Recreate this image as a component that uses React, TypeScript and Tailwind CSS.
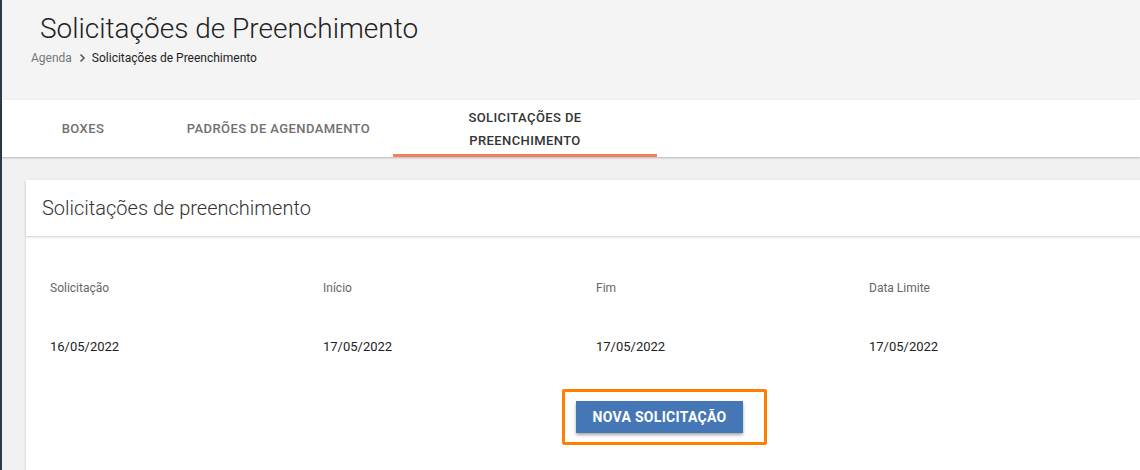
import React from "react";

export default function App() {
  const cols = ["Solicitação", "Início", "Fim", "Data Limite"];
  const vals = ["16/05/2022", "17/05/2022", "17/05/2022", "17/05/2022"];
  return (
    <div
      className="w-[1140px] h-[470px] overflow-hidden flex bg-[#f1f1f1]"
      style={{ fontFamily: "Roboto, 'Liberation Sans', sans-serif" }}
    >
      <div className="w-[2px] shrink-0 bg-[#2f3949]" />
      <div className="flex-1 min-w-0 flex flex-col">
        {/* Header */}
        <div className="h-[100px] shrink-0 bg-[#f4f4f4] pt-[11px]">
          <h1 className="pl-[38px] text-[28px] leading-[36px] font-light text-[#222]">
            Solicitações de Preenchimento
          </h1>
          <div className="pl-[29px] mt-[3px] flex items-center text-[12px] leading-[16px]">
            <span className="text-[#777]">Agenda</span>
            <svg
              width="12"
              height="12"
              viewBox="0 0 24 24"
              className="mx-[4px]"
              fill="none"
              stroke="#555"
              strokeWidth="3"
            >
              <path d="M9 5l7 7-7 7" />
            </svg>
            <span className="text-[#222]">Solicitações de Preenchimento</span>
          </div>
        </div>
        {/* Tabs */}
        <div className="h-[57px] shrink-0 bg-white flex items-stretch shadow-[0_1px_2px_rgba(0,0,0,0.25)] relative z-10 text-[13px] font-medium tracking-[0.4px] uppercase">
          <div className="w-[162px] flex items-center justify-center text-[#707070]">
            Boxes
          </div>
          <div className="w-[229px] flex items-center justify-center text-[#707070]">
            Padrões de Agendamento
          </div>
          <div className="w-[264px] flex flex-col justify-center items-center text-[#333] border-b-[3px] border-[#f0805f] pt-[3px] leading-[23px]">
            <span>Solicitações de</span>
            <span>Preenchimento</span>
          </div>
        </div>
        {/* Content */}
        <div className="pl-[24px] pt-[23px] shrink-0">
          <div className="w-[1160px] bg-white shadow-[0_1px_3px_rgba(0,0,0,0.15)]">
            <div className="h-[57px] flex items-center pl-[16px] border-b border-[#dcdcdc] shadow-[0_1px_2px_rgba(0,0,0,0.08)]">
              <h2 className="text-[20px] font-light text-[#333]">
                Solicitações de preenchimento
              </h2>
            </div>
            <div className="pl-[24px] pt-[43px]">
              <div className="grid grid-cols-[273px_273px_273px_273px]">
                {cols.map((c) => (
                  <div
                    key={c}
                    className="text-[12px] leading-[16px] text-[#666]"
                  >
                    {c}
                  </div>
                ))}
              </div>
              <div className="grid grid-cols-[273px_273px_273px_273px] mt-[42px]">
                {vals.map((v, i) => (
                  <div
                    key={i}
                    className="text-[13px] leading-[18px] text-[#222]"
                  >
                    {v}
                  </div>
                ))}
              </div>
              <div className="pl-[512px] mt-[33px] pb-[60px]">
                <div className="inline-flex border-[3px] border-[#ff8000] rounded-[2px] pl-[11px] pr-[21px] pt-[9px] pb-[9px]">
                  <button className="w-[167px] h-[32px] bg-[#4577b6] text-white text-[14px] font-bold tracking-[0.3px] shadow-[0_2px_3px_rgba(0,0,0,0.35)]">
                    NOVA SOLICITAÇÃO
                  </button>
                </div>
              </div>
            </div>
          </div>
        </div>
      </div>
    </div>
  );
}
